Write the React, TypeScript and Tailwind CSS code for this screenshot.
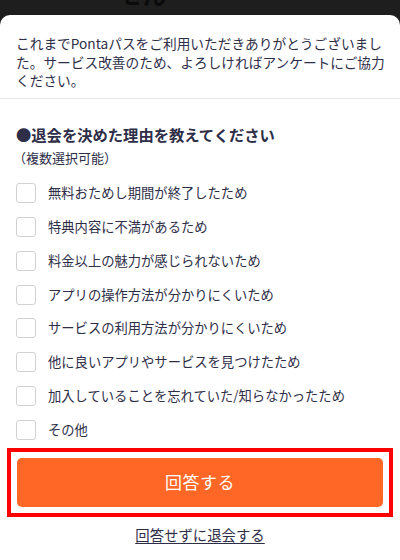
import React from 'react';

const reasons = [
  '無料おためし期間が終了したため',
  '特典内容に不満があるため',
  '料金以上の魅力が感じられないため',
  'アプリの操作方法が分かりにくいため',
  'サービスの利用方法が分かりにくいため',
  '他に良いアプリやサービスを見つけたため',
  '加入していることを忘れていた/知らなかったため',
  'その他',
];

const font = { fontFamily: '"Noto Sans CJK JP", "Noto Sans", sans-serif' };

const App: React.FC = () => {
  return (
    <div className="w-[400px] h-[560px] overflow-hidden bg-[#1e1e1e] flex flex-col" style={font}>
      {/* page behind the sheet */}
      <div className="h-[15px] shrink-0 overflow-hidden pl-[120px]">
        <div className="-mt-[21px] text-[23px] leading-[30px] font-bold text-[#0b0b0b]">せん</div>
      </div>

      <div className="flex-1 bg-white rounded-t-[10px] flex flex-col text-[#2e2e48]">
        <div className="px-4 pt-[19px] pb-[8px] border-b border-[#e6e6e6] text-[13.7px] leading-[18.5px]">
          <p className="whitespace-nowrap">
            これまでPontaパスをご利用いただきありがとうございまし
            <br />
            た。サービス改善のため、よろしければアンケートにご協力
            <br />
            ください。
          </p>
        </div>

        <div className="px-4 pt-6">
          <h2 className="text-[15.3px] leading-[22px] font-bold">●退会を決めた理由を教えてください</h2>
          <p className="mt-1 -ml-[3px] text-[13px] leading-[18px]">（複数選択可能）</p>
        </div>

        <ul className="mt-[10px] px-4">
          {reasons.map((reason) => (
            <li key={reason} className="h-[33.75px] flex items-center gap-3">
              <span className="w-5 h-5 shrink-0 rounded-[3px] border border-[#d2d2d2] bg-white" />
              <span className="text-[13.3px] leading-5 whitespace-nowrap">{reason}</span>
            </li>
          ))}
        </ul>

        <div className="mx-[7px] mt-px border-4 border-[#ff0000] p-[6px]">
          <button className="w-full h-[49px] rounded-[5px] bg-[#ff6726] text-white text-[17px] tracking-[0.5px]">
            回答する
          </button>
        </div>

        <div className="mt-[5px] text-center">
          <a className="text-[14.4px] leading-5 underline underline-offset-2 text-[#2e2e48]">回答せずに退会する</a>
        </div>
      </div>
    </div>
  );
};

export default App;
